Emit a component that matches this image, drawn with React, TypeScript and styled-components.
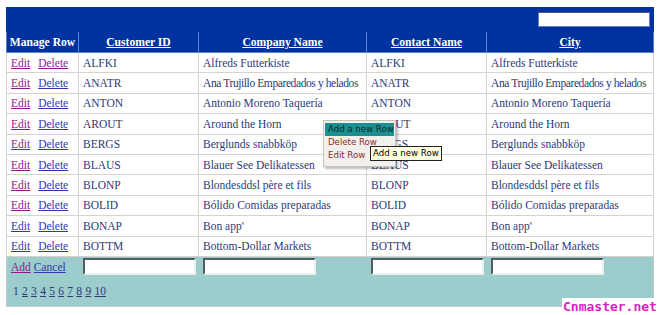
import React from "react";
import styled, { createGlobalStyle } from "styled-components";

const Global = createGlobalStyle`
  html, body { margin: 0; padding: 0; background: #ffffff; }
  body { padding: 7px 0 0 6px; font-family: "Liberation Serif", "Times New Roman", serif; }
`;

const Page = styled.div`
  position: relative;
  width: 656px;
  height: 308px;
`;

const Grid = styled.table`
  border-collapse: collapse;
  width: 647px;
  table-layout: fixed;
  font-family: "Liberation Serif", "Times New Roman", serif;
  font-size: 11.5px;
  color: #2c3a78;
  border: 1px solid #c8c8c8;
`;

const TopBar = styled.td`
  background: #0033a0;
  height: 23px;
  padding: 0 3px 0 0;
  text-align: right;
  border: 1px solid #0033a0;
`;

const SearchBox = styled.input`
  width: 112px;
  height: 15px;
  box-sizing: border-box;
  border: 1px solid #6a7fb0;
  border-top-color: #4a5a80;
  background: #fff;
  vertical-align: middle;
  padding: 0;
`;

const Th = styled.th`
  background: #0033a0;
  color: #ffffff;
  font-weight: bold;
  font-size: 11.6px;
  height: 20px;
  padding: 0 2px;
  border: 1px solid #5b80cf;
  white-space: nowrap;
  text-align: center;
  a { color: #ffffff; text-decoration: underline; }
`;

const Td = styled.td<{ $fit?: boolean }>`
  height: 19.4px;
  padding: 0 3px 0 4px;
  border: 1px solid #d6d3cc;
  white-space: nowrap;
  overflow: hidden;
  background: #ffffff;
  letter-spacing: ${(p) => (p.$fit ? "-0.4px" : "0")};
`;

const ActionLink = styled.a<{ $visited?: boolean }>`
  color: ${(p) => (p.$visited ? "#8b1a8b" : "#3535b0")};
  text-decoration: underline;
  margin-right: 8px;
`;

const FooterTd = styled.td`
  background: #9ccccc;
  height: 20px;
  padding: 0 2px 0 4px;
  white-space: nowrap;
`;

const EditBox = styled.input`
  width: 113px;
  height: 17px;
  box-sizing: border-box;
  border: 2px solid #4f6060;
  border-right-color: #e8f0f0;
  border-bottom-color: #e8f0f0;
  background: #fff;
  padding: 0;
  vertical-align: middle;
`;

const PagerTd = styled.td`
  background: #9ccccc;
  height: 29px;
  padding: 0 4px 0 6px;
  font-size: 11.5px;
  color: #2c3a78;
`;

const PageLink = styled.a<{ $current?: boolean }>`
  color: #2c3a78;
  text-decoration: ${(p) => (p.$current ? "none" : "underline")};
  margin-right: 3.3px;
`;

const Menu = styled.div`
  position: absolute;
  left: 317px;
  top: 113px;
  width: 71px;
  background: #f2f0ec;
  border: 1px solid #c8c4bc;
  box-shadow: 2px 2px 2px rgba(0, 0, 0, 0.25);
  padding: 2px 0 4px;
  font-family: "DejaVu Sans", "Verdana", sans-serif;
  font-size: 8.6px;
`;

const MenuItem = styled.div<{ $active?: boolean }>`
  height: 13px;
  line-height: 13px;
  padding: 0 3px;
  margin: 0 1px;
  background: ${(p) => (p.$active ? "#1c9090" : "transparent")};
  color: ${(p) => (p.$active ? "#0a2a2a" : "#8c2a2a")};
  white-space: nowrap;
`;

const Tip = styled.div`
  position: absolute;
  left: 364px;
  top: 139px;
  background: #ffffe1;
  border: 1px solid #222;
  padding: 0 2px;
  height: 13px;
  line-height: 13px;
  font-family: "DejaVu Sans", "Verdana", sans-serif;
  font-size: 8.6px;
  color: #000;
  white-space: nowrap;
`;

const Watermark = styled.div`
  position: absolute;
  left: 556px;
  top: 291px;
  background: #ffffff;
  color: #d81fc8;
  font-family: "DejaVu Sans Mono", "Liberation Mono", monospace;
  font-weight: bold;
  font-size: 13px;
  line-height: 17px;
  padding: 0 1px;
`;

const rows = [
  ["ALFKI", "Alfreds Futterkiste"],
  ["ANATR", "Ana Trujillo Emparedados y helados"],
  ["ANTON", "Antonio Moreno Taquería"],
  ["AROUT", "Around the Horn"],
  ["BERGS", "Berglunds snabbköp"],
  ["BLAUS", "Blauer See Delikatessen"],
  ["BLONP", "Blondesddsl père et fils"],
  ["BOLID", "Bólido Comidas preparadas"],
  ["BONAP", "Bon app'"],
  ["BOTTM", "Bottom-Dollar Markets"],
];

export default function App() {
  return (
    <Page>
      <Global />
      <Grid>
        <colgroup>
          <col style={{ width: 72 }} />
          <col style={{ width: 120 }} />
          <col style={{ width: 168 }} />
          <col style={{ width: 120 }} />
          <col style={{ width: 167 }} />
        </colgroup>
        <tbody>
          <tr>
            <TopBar colSpan={5}>
              <SearchBox />
            </TopBar>
          </tr>
          <tr>
            <Th>Manage Row</Th>
            <Th><a href="#">Customer ID</a></Th>
            <Th><a href="#">Company Name</a></Th>
            <Th><a href="#">Contact Name</a></Th>
            <Th><a href="#">City</a></Th>
          </tr>
          {rows.map(([id, name], i) => {
            const long = name.length > 28;
            return (
              <tr key={id}>
                <Td>
                  <ActionLink href="#" $visited={i < 8}>Edit</ActionLink>
                  <ActionLink href="#" $visited={i === 0}>Delete</ActionLink>
                </Td>
                <Td>{id}</Td>
                <Td $fit={long}>{name}</Td>
                <Td>{id}</Td>
                <Td $fit={long}>{name}</Td>
              </tr>
            );
          })}
          <tr>
            <FooterTd>
              <ActionLink href="#" $visited style={{ marginRight: 3 }}>Add</ActionLink>
              <ActionLink href="#">Cancel</ActionLink>
            </FooterTd>
            <FooterTd><EditBox /></FooterTd>
            <FooterTd><EditBox /></FooterTd>
            <FooterTd><EditBox /></FooterTd>
            <FooterTd><EditBox /></FooterTd>
          </tr>
          <tr>
            <PagerTd colSpan={5}>
              <PageLink $current>1</PageLink>
              {[2, 3, 4, 5, 6, 7, 8, 9, 10].map((n) => (
                <PageLink key={n} href="#">{n}</PageLink>
              ))}
            </PagerTd>
          </tr>
        </tbody>
      </Grid>
      <Menu>
        <MenuItem $active>Add a new Row</MenuItem>
        <MenuItem>Delete Row</MenuItem>
        <MenuItem>Edit Row</MenuItem>
      </Menu>
      <Tip>Add a new Row</Tip>
      <Watermark>Cnmaster.net</Watermark>
    </Page>
  );
}
